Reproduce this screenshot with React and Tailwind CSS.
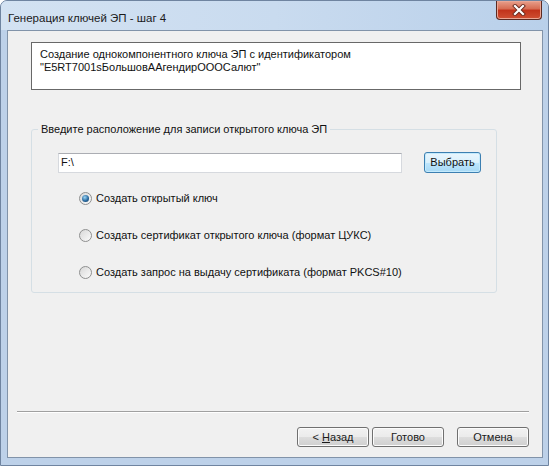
import React from "react";

function Radio({ checked, label }) {
  return (
    <div className="flex h-[13px] items-center">
      <span className="flex h-[13px] w-[13px] items-center justify-center rounded-full border border-[#8e8f8f] bg-gradient-to-br from-[#d8d8d8] to-[#fbfbfb]">
        {checked && (
          <span className="h-[7px] w-[7px] rounded-full bg-[radial-gradient(circle_at_40%_35%,#9cd6f5,#2a6aa0_55%,#0d3558)]" />
        )}
      </span>
      <span className="ml-[4px] leading-[13px]">{label}</span>
    </div>
  );
}

function WinButton({ children, className = "" }) {
  return (
    <button
      className={
        "flex h-[20px] w-[72px] items-center justify-center rounded-[3px] border border-[#707070] bg-[linear-gradient(#f2f2f2,#ebebeb_50%,#dddddd_51%,#cfcfcf)] text-[11px] leading-none text-[#1a1a1a] shadow-[inset_0_0_0_1px_#fcfcfc] " +
        className
      }
    >
      {children}
    </button>
  );
}

export default function App() {
  return (
    <div
      className="flex h-[466px] w-[549px] flex-col overflow-hidden rounded-t-[7px] border border-[#6f84a0] bg-[#bdd1e9] text-[11px] text-[#111]"
      style={{ fontFamily: '"Liberation Sans", Arial, sans-serif' }}
    >
      {/* title bar */}
      <div className="flex h-[29px] shrink-0 items-start bg-gradient-to-r from-[#d3e2f2] via-[#c9dbef] to-[#b9d0ea]">
        <div className="ml-[7px] mt-[10px] text-[11.5px] leading-[14px] text-[#1b1b1b]">
          Генерация ключей ЭП - шаг 4
        </div>
        <div className="flex-1" />
        <div className="mr-[6px] flex h-[19px] w-[46px] items-center justify-center rounded-b-[4px] border border-t-0 border-[#5b2a22] bg-[linear-gradient(#e8a08c,#d66a50_45%,#c1321a_50%,#cf5033)] shadow-[inset_0_0_0_1px_#eba694]">
          <svg width="14" height="12" viewBox="0 0 14 12">
            <path d="M3 2 L11 10 M11 2 L3 10" stroke="#6a2a1e" strokeWidth="4" strokeLinecap="square" />
            <path d="M3 2 L11 10 M11 2 L3 10" stroke="#ffffff" strokeWidth="2.2" strokeLinecap="square" />
          </svg>
        </div>
      </div>

      {/* client area */}
      <div className="ml-[6px] mr-[5px] flex h-[428px] flex-col border border-[#8193a9] bg-[#f0f0f0]">
        <div className="ml-[23px] mr-[21px] mt-[11px] h-[48px] border border-[#686868] bg-white px-[8px] pt-[5px] leading-[13px]">
          <div>Создание однокомпонентного ключа ЭП с идентификатором</div>
          <div>"E5RT7001sБольшовААгендирОООСалют"</div>
        </div>

        <fieldset className="ml-[23px] mt-[33px] w-[466px] rounded-[3px] border border-[#d5dfe5] pb-[13px]">
          <legend className="ml-[6px] px-[3px] leading-[13px]">
            Введите расположение для записи открытого ключа ЭП
          </legend>
          <div className="mt-[16px] flex items-center pl-[26px]">
            <div className="flex h-[20px] w-[344px] items-center border border-[#d6d9de] border-t-[#abadb3] bg-white px-[2px]">
              F:\
            </div>
            <button className="ml-[22px] flex h-[21px] w-[57px] items-center justify-center rounded-[3px] border border-[#3c7fb1] bg-[linear-gradient(#eaf6fd,#d9f0fc_50%,#bee6fd_51%,#a7d9f5)] text-[11px] leading-none shadow-[inset_0_0_0_1px_#c4eafc]">
              Выбрать
            </button>
          </div>
          <div className="mt-[19px] flex flex-col gap-[24px] pl-[47px]">
            <Radio checked label="Создать открытый ключ" />
            <Radio label="Создать сертификат открытого ключа (формат ЦУКС)" />
            <Radio label="Создать запрос на выдачу сертификата (формат PKCS#10)" />
          </div>
        </fieldset>

        <div className="flex-1" />

        <div className="ml-[9px] mr-[13px] h-[2px] border-t border-[#a0a0a0] bg-white" />

        <div className="mb-[10px] mt-[14px] flex justify-end pr-[13px]">
          <WinButton>
            &lt;&nbsp;<span className="underline">Н</span>азад
          </WinButton>
          <WinButton className="ml-[3px]">Готово</WinButton>
          <WinButton className="ml-[13px]">Отмена</WinButton>
        </div>
      </div>
      <div className="flex-1" />
    </div>
  );
}
